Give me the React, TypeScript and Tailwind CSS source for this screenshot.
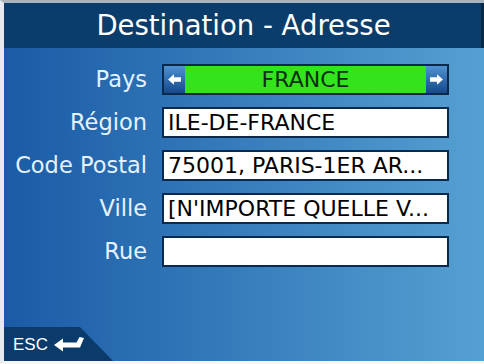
import React from 'react';

const fields = [
  { label: 'Région', value: 'ILE-DE-FRANCE' },
  { label: 'Code Postal', value: '75001, PARIS-1ER AR...' },
  { label: 'Ville', value: "[N'IMPORTE QUELLE V..." },
  { label: 'Rue', value: '' },
];

const ArrowBtn = ({ dir }: { dir: 'left' | 'right' }) => (
  <div className="w-[21px] h-full flex items-center justify-center bg-gradient-to-b from-[#4f93d3] to-[#17488a]">
    <svg width="15" height="13" viewBox="0 0 14 12" className={dir === 'right' ? 'rotate-180' : ''}>
      <path d="M1 6 L6.5 1 L6.5 4 L13 4 L13 8 L6.5 8 L6.5 11 Z" fill="#ffffff" />
    </svg>
  </div>
);

export default function App() {
  return (
    <div
      className="w-[484px] h-[364px] flex flex-col border-l-4 border-l-[#e6eaee] border-t-[3px] border-t-[#aab4bd] border-b-[3px] border-b-[#f4f6f8] overflow-hidden"
      style={{ fontFamily: '"DejaVu Sans", Verdana, sans-serif' }}
    >
      {/* Header */}
      <div className="h-[45px] shrink-0 bg-[#0b3d6c] border-r-[3px] border-r-[#082a48] flex items-center justify-center">
        <h1 className="text-white text-[27.5px] leading-none pl-[2px] pt-[1px]">Destination - Adresse</h1>
      </div>

      {/* Body */}
      <div className="flex-1 flex flex-col bg-gradient-to-r from-[#1a5ba6] to-[#55a0d2]">
        <div className="pt-[16px] flex flex-col gap-[12px]">
          <div className="flex items-center h-[31px]">
            <span className="w-[143px] text-right text-[22.5px] leading-none text-[#e4f2ff]">Pays</span>
            <div className="ml-[15px] w-[287px] h-full flex border-2 border-[#0a2a4d] bg-[#33e41c]">
              <ArrowBtn dir="left" />
              <div className="flex-1 flex items-center justify-center text-[22px] leading-none text-[#0b3010]">FRANCE</div>
              <ArrowBtn dir="right" />
            </div>
          </div>
          {fields.map((f) => (
            <div key={f.label} className="flex items-center h-[31px]">
              <span className="w-[143px] text-right text-[22.5px] leading-none text-[#e4f2ff]">{f.label}</span>
              <div className="ml-[15px] w-[287px] h-full flex items-center border-2 border-[#0a2a4d] bg-white pl-[4px] text-[22px] leading-none text-black whitespace-nowrap overflow-hidden">
                {f.value}
              </div>
            </div>
          ))}
        </div>

        {/* ESC tab */}
        <div className="mt-auto w-[109px] h-[34px] bg-[#0b3b6a] [clip-path:polygon(0_0,76px_0,100%_100%,0_100%)] flex items-center pl-[9px] gap-[5px]">
          <span className="text-white text-[17px] leading-none" style={{ fontFamily: '"Liberation Sans", Arial, sans-serif' }}>ESC</span>
          <svg width="32" height="16" viewBox="0 0 32 16">
            <path d="M26.5 1 L31 2 L27 11.5 L10 11.5 L10 15.5 L1 9 L10 2.5 L10 6.5 L23.5 6.5 Z" fill="#ffffff" />
          </svg>
        </div>
      </div>
    </div>
  );
}
